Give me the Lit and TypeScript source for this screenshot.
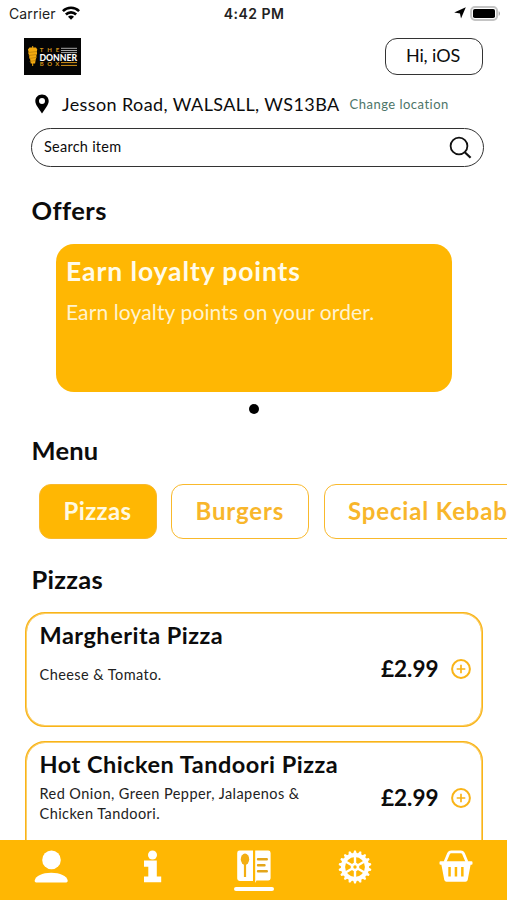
import { LitElement, html, css, svg } from "lit";
import { classMap } from "lit/directives/class-map.js";
import { customElement, property, state } from "lit/decorators.js";

const pin = svg`<svg width="14" height="20" viewBox="0 0 14 20"><path fill-rule="evenodd" d="M7 .5C3.2.5.3 3.4.3 7c0 2 .9 3.7 2 5.6L7 19.6l4.7-7c1.1-1.9 2-3.6 2-5.6C13.7 3.4 10.8.5 7 .5Zm0 3.6a3 3 0 1 1 0 6 3 3 0 0 1 0-6Z"/></svg>`;
const wifi = svg`<svg width="18" height="14" viewBox="0 0 18 14" fill="none" stroke="#000" stroke-width="2.6"><path d="M.9 5.100a11.500 11.500 0 0 1 16.200 0"/><path d="M3.900 8.500a7.200 7.200 0 0 1 10.200 0"/><path d="M9 13.700 6 10.800a4.200 4.200 0 0 1 6 0Z" fill="#000" stroke="none"/></svg>`;
const arrow = svg`<svg width="12" height="12" viewBox="0 0 12 12"><path d="M11.800.3 7 11.600 6 6.400.2 5.400Z"/></svg>`;
const battery = svg`<svg width="31" height="15" viewBox="0 0 31 15"><rect x="1.100" y="1.100" width="26" height="12.800" rx="3.800" fill="#fff" stroke="#c4c4c4" stroke-width="2"/><rect x="3" y="3" width="22" height="9" rx="1.800"/><path d="M28.700 5.200c1.700.6 1.700 4 0 4.600Z" fill="#aaa"/></svg>`;
const lens = svg`<svg width="24" height="24" viewBox="0 0 24 24" fill="none" stroke="#111" stroke-width="1.8"><circle cx="10" cy="10" r="8.400"/><path d="m15.800 16.200 5.800 5.600" stroke-width="2.200"/></svg>`;
const plus = svg`<svg width="20" height="20" viewBox="0 0 20 20" fill="none" stroke="#f9b418" stroke-width="2"><circle cx="10" cy="10" r="8.900"/><path d="M10 5.700v8.600M5.700 10h8.600" stroke-width="1.700"/></svg>`;

const logo = svg`<svg width="57" height="37" viewBox="0 0 57 37">
  <rect width="57" height="37" fill="#050505"/>
  <path d="M8.700 8v2.500M8.700 25v3" stroke="#f3a90f"/>
  <path d="M5.500 9.500h6.500l1.300 2-.5 2 .3 2-.7 2 .1 2-.8 2-.6 4H6.700l-.5-4-1-2 .1-2-1-2 .2-2-.6-2Z" fill="#f3a90f"/>
  <path d="m4.500 14.500 8-1m-8 4 8-1m-7.500 4 7-1m-6.500 4 6-1" stroke="#9c6905" stroke-width=".5"/>
  <g class="logo-small"><text x="15.800" y="14" textLength="19.500">THE</text><text x="15.800" y="28" textLength="19.500">BOX</text></g>
  <text class="logo-name" x="15.400" y="22.500" textLength="37.800" lengthAdjust="spacingAndGlyphs">DONNER</text>
  <path d="M37 10.300h16M37 12.500h16M37 14.600h16" stroke="#bbb" stroke-width=".9"/>
  <path d="M37 24.600h16M37 27.400h16" stroke="#d6961a" stroke-width="1"/>
</svg>`;

const teeth = Array.from({ length: 18 }, (_, i) => svg`<path d="M15 4 16.200.6h1.600L19 4Z" transform=${`rotate(${i * 20} 17 17)`}/>`);
const spokes = Array.from({ length: 6 }, (_, i) => svg`<path d="M17 14V6" transform=${`rotate(${i * 60} 17 17)`} stroke="#fff" stroke-width="2.4"/>`);

const navIcons: Record<string, unknown> = {
  profile: svg`<svg width="34" height="34" viewBox="0 0 34 34" fill="#fff"><circle cx="17.500" cy="9.900" r="9.300"/><path d="M.7 30.500C1.700 26 8.200 22.800 17.200 22.800S32.700 26 33.700 30.500c.2 1-.5 1.900-1.500 1.900H2.200C1.200 32.400.5 31.500.7 30.500Z"/></svg>`,
  info: svg`<svg width="34" height="34" viewBox="0 0 34 34" fill="#fff"><circle cx="17.500" cy="5" r="4.500"/><path d="M9 10.600h12.800v15.800h4.400v5.900H9v-5.900h4.300v-9.700H9Z"/></svg>`,
  menu: svg`<svg width="36" height="34" viewBox="0 0 36 34"><path d="M3.600.5H17V31H3.600A2.400 2.400 0 0 1 1.200 28.600V2.900A2.400 2.400 0 0 1 3.600.5ZM19.200.5h13a2.400 2.400 0 0 1 2.400 2.400v25.300a2.400 2.400 0 0 1-2.400 2.400H20.500L19.200 33Z" fill="#fff"/><ellipse cx="9" cy="9.200" rx="4.200" ry="5.600" fill="#f3ae12"/><path d="M9 14v13" stroke="#f3ae12" stroke-width="2.200"/><path d="M22 9.300h8.800M22 15.300h6.500M22 21.300h8.800" stroke="#e3a51b" stroke-width="2.400" stroke-linecap="round"/></svg>`,
  settings: svg`<svg width="34" height="34" viewBox="0 0 34 34" fill="#fff">${teeth}<circle cx="17" cy="17" r="12" fill="none" stroke="#fff" stroke-width="4.2"/>${spokes}<circle cx="17" cy="17" r="4.300"/><circle cx="17" cy="17" r="1.700" fill="#ffb703"/></svg>`,
  basket: svg`<svg width="34" height="34" viewBox="0 0 34 34" fill="#fff"><path d="M6 12 9.600 3.400Q10.400 1.900 12.200 1.900H21.800Q23.600 1.900 24.400 3.400L28 12" fill="none" stroke="#fff" stroke-width="2.800"/><path fill-rule="evenodd" d="M1.500 11.300h31q1 0 1 1v1.500q0 1-1 1h-.9L28.700 30q-.5 1.700-2.200 1.700h-19Q5.800 31.700 5.300 30L2.400 14.800h-.9q-1 0-1-1v-1.500q0-1 1-1ZM9.300 17v9.500h2.500V17Zm6.400 0v9.500h2.500V17Zm6.400 0v9.500h2.500V17Z"/></svg>`,
};

@customElement("status-bar")
class StatusBar extends LitElement {
  static styles = css`
    :host { display: grid; grid-template-columns: 1fr auto 1fr; align-items: center; height: 28px; padding: 0 6px 0 9px; box-sizing: border-box; font: 400 14px/20px Inter, sans-serif; color: #222; }
    .side { display: flex; align-items: center; gap: 6px; }
    .side svg { margin-top: -2px; }
    .end { justify-content: flex-end; gap: 4px; }
    .carrier { letter-spacing: .12px; }
    .time { font-weight: 600; letter-spacing: .48px; margin: 0 2px 0 0; }
    svg { display: block; }
  `;
  render() {
    return html`<div class="side"><span class="carrier">Carrier</span>${wifi}</div><div class="time">4:42 PM</div><div class="side end">${arrow}${battery}</div>`;
  }
}

@customElement("menu-item")
class MenuItem extends LitElement {
  @property() name = "";
  @property() description = "";
  @property() price = "";
  static styles = css`
    :host { display: flex; box-sizing: border-box; min-height: 115px; border: 2px solid #f9b418; outline: .5px solid #fbcf6a; outline-offset: -2px; border-radius: 20px; padding: 0 10.500px 0 12.500px; align-items: stretch; }
    .info { flex: 1; display: flex; flex-direction: column; padding-top: 6px; }
    .name { font-weight: 700; font-size: 23.500px; line-height: 30px; letter-spacing: .5px; white-space: nowrap; }
    .desc { height: 42px; margin-top: 4px; width: 285px; display: flex; align-items: center; font-size: 14.500px; line-height: 20px; letter-spacing: .44px; color: #222; }
    .buy { display: flex; align-items: center; gap: 12px; height: 110px; }
    .price { font-weight: 700; font-size: 22.500px; margin-left: -80px; }
    svg { display: block; }
  `;
  render() {
    return html`<div class="info"><div class="name">${this.name}</div><div class="desc"><span>${this.description}</span></div></div>
      <div class="buy"><span class="price">${this.price}</span>${plus}</div>`;
  }
}

@customElement("app-root")
class AppRoot extends LitElement {
  @state() tab = "Pizzas";
  @state() page = "menu";

  static styles = css`
    :host { display: flex; flex-direction: column; height: 900px; overflow: hidden; background: #fff; color: #0c0c0c; font: 400 18px/24px Lato, sans-serif; }
    svg { display: block; }
    .head { display: flex; justify-content: space-between; align-items: center; height: 56px; padding: 0 24px; flex: none; }
    .greeting { box-sizing: border-box; width: 98px; height: 37px; border: 1.400px solid #333; border-radius: 12px; text-align: center; line-height: 33px; font-size: 18px; letter-spacing: -.1px; padding-right: 2px; }
    .logo-small { font: 700 6px Lato, sans-serif; fill: #d6961a; }
    .logo-name { font: 900 10px Lato, sans-serif; fill: #fff; }
    .location { display: flex; align-items: center; height: 24px; padding: 0 0 0 35px; margin-top: 8px; flex: none; }
    .address { margin-left: 13px; font-size: 18px; letter-spacing: .4px; }
    .change { margin-left: 10px; font-size: 13px; letter-spacing: .48px; color: #4d7568; }
    .search { display: flex; align-items: center; justify-content: space-between; box-sizing: border-box; height: 39px; margin: 12px 23px 0 31px; padding: 0 10px 1px 12px; border: 1.400px solid #333; border-radius: 20px; flex: none; font-size: 14.500px; letter-spacing: .25px; }
    .search svg { margin-top: 2px; }
    h2 { margin: 0 0 0 31.500px; font-size: 25.500px; line-height: 32px; font-weight: 700; letter-spacing: .45px; flex: none; }
    .offers { margin-top: 27px; }
    .menu { margin-top: 20px; letter-spacing: .2px; }
    .list { margin-top: 24px; letter-spacing: .3px; }
    .offer { box-sizing: border-box; height: 148px; margin: 18px 55px 0 56px; padding: 10px 10px; border-radius: 18px; background: #ffb703; color: #fffbe9; flex: none; }
    .offer-title { font-size: 26.500px; line-height: 34px; font-weight: 700; letter-spacing: .9px; }
    .offer-text { margin-top: 11px; font-size: 21px; line-height: 26px; letter-spacing: .12px; color: #fff3cf; }
    .dot { width: 10px; height: 10px; border-radius: 50%; background: #000; margin: 12px auto 0; flex: none; }
    .tabs { display: flex; gap: 14.500px; margin: 18px 0 0 39px; flex: none; }
    .tab { box-sizing: border-box; height: 55px; padding: 0 23.500px; border: 1.500px solid #f9b92c; border-radius: 12px; color: #f8b62b; font-size: 24px; line-height: 52px; font-weight: 700; white-space: nowrap; flex: none; }
    .tab.active { background: #ffb703; color: #fff9e2; }
    .pizzas { width: 117.500px; letter-spacing: .38px; }
    .burgers { width: 138px; letter-spacing: .85px; }
    .kebab { width: 230px; letter-spacing: .84px; }
    .items { display: flex; flex-direction: column; gap: 14px; margin: 17px 24px 0 25px; flex: 1; min-height: 0; overflow: hidden; }
    menu-item { flex: none; }
    .tall { height: 130px; }
    .nav { display: flex; height: 60px; flex: none; background: #ffb703; }
    .nav-item { flex: 1; display: flex; flex-direction: column; align-items: center; padding-top: 9.500px; }
    .underline { width: 40px; height: 3.500px; border-radius: 2px; background: #fff; margin-top: 3.500px; }
  `;

  render() {
    const tabs = [["Pizzas", "pizzas"], ["Burgers", "burgers"], ["Special Kebab", "kebab"]];
    return html`
      <status-bar></status-bar>
      <div class="head">${logo}<div class="greeting">Hi, iOS</div></div>
      <div class="location">${pin}<span class="address">Jesson Road, WALSALL, WS13BA</span><span class="change">Change location</span></div>
      <div class="search"><span>Search item</span>${lens}</div>
      <h2 class="offers">Offers</h2>
      <div class="offer"><div class="offer-title">Earn loyalty points</div><div class="offer-text">Earn loyalty points on your order.</div></div>
      <div class="dot"></div>
      <h2 class="menu">Menu</h2>
      <div class="tabs">${tabs.map(([label, cls]) => html`<div class=${classMap({ tab: true, [cls]: true, active: this.tab === label })} @click=${() => (this.tab = label)}>${label}</div>`)}</div>
      <h2 class="list">${this.tab}</h2>
      <div class="items">
        <menu-item name="Margherita Pizza" description="Cheese & Tomato." price="£2.99"></menu-item>
        <menu-item class="tall" name="Hot Chicken Tandoori Pizza" description="Red Onion, Green Pepper, Jalapenos & Chicken Tandoori." price="£2.99"></menu-item>
      </div>
      <div class="nav">${Object.entries(navIcons).map(([key, icon]) => html`<div class="nav-item" @click=${() => (this.page = key)}>${icon}${this.page === key ? html`<div class="underline"></div>` : null}</div>`)}</div>
    `;
  }
}
